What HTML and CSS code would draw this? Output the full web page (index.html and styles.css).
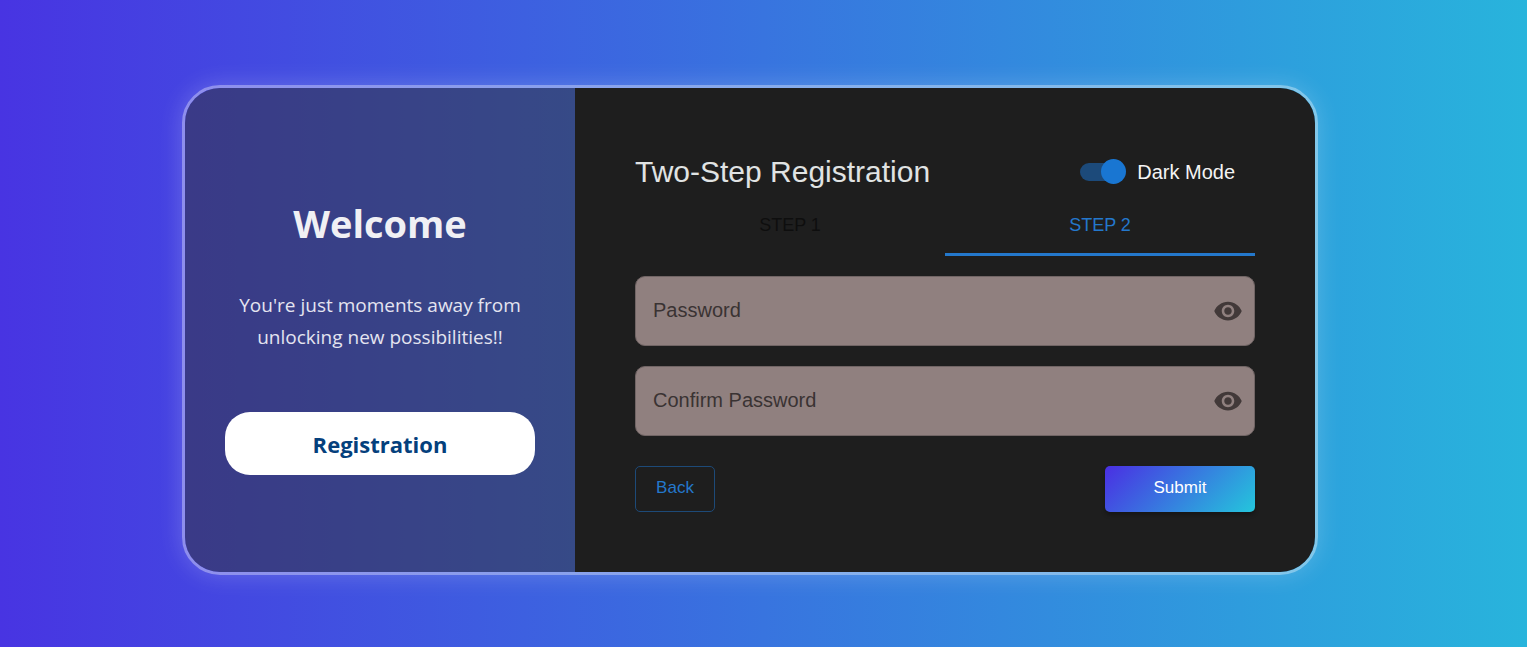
FILE: index.html
```html
<!DOCTYPE html>
<html lang="en">
<head>
<meta charset="utf-8">
<meta name="viewport" content="width=device-width, initial-scale=1">
<title>Two-Step Registration</title>
<link rel="stylesheet" href="styles.css">
</head>
<body>
<main class="card">
  <section class="welcome">
    <h1 class="welcome-title">Welcome</h1>
    <p class="welcome-text">You're just moments away from unlocking new possibilities!!</p>
    <button class="welcome-button" type="button">Registration</button>
  </section>
  <form class="form">
    <header class="form-header">
      <h2 class="form-title">Two-Step Registration</h2>
      <label class="mode"><input class="switch" type="checkbox" role="switch" checked>Dark Mode</label>
    </header>
    <div class="tabs" role="tablist">
      <button class="tab" type="button" role="tab" aria-selected="false">STEP 1</button>
      <button class="tab tab-active" type="button" role="tab" aria-selected="true">STEP 2</button>
    </div>
    <div class="fields">
      <div class="field">
        <input class="field-input" type="password" placeholder="Password" aria-label="Password">
        <button class="eye" type="button" aria-label="Show password">
          <svg class="eye-icon" viewBox="0 0 24 24"><path d="M12 4.500C7 4.500 2.730 7.610 1 12c1.730 4.390 6 7.500 11 7.500s9.270-3.110 11-7.500c-1.730-4.390-6-7.500-11-7.500M12 17c-2.760 0-5-2.240-5-5s2.240-5 5-5 5 2.240 5 5-2.240 5-5 5m0-8c-1.660 0-3 1.340-3 3s1.340 3 3 3 3-1.340 3-3-1.340-3-3-3"/></svg>
        </button>
      </div>
      <div class="field">
        <input class="field-input" type="password" placeholder="Confirm Password" aria-label="Confirm Password">
        <button class="eye" type="button" aria-label="Show confirmed password">
          <svg class="eye-icon" viewBox="0 0 24 24"><path d="M12 4.500C7 4.500 2.730 7.610 1 12c1.730 4.390 6 7.500 11 7.500s9.270-3.110 11-7.500c-1.730-4.390-6-7.500-11-7.500M12 17c-2.760 0-5-2.240-5-5s2.240-5 5-5 5 2.240 5 5-2.240 5-5 5m0-8c-1.660 0-3 1.340-3 3s1.340 3 3 3 3-1.340 3-3-1.340-3-3-3"/></svg>
        </button>
      </div>
    </div>
    <div class="actions">
      <button class="back" type="button">Back</button>
      <button class="submit" type="submit">Submit</button>
    </div>
  </form>
</main>
</body>
</html>
```
FILE: styles.css
```css
* { box-sizing: border-box; }

body {
  margin: 0;
  min-height: 100vh;
  padding: 37px 51px 24px 24px;
  display: flex;
  align-items: center;
  justify-content: center;
  background: linear-gradient(90deg, #4834e2, #28b4dc);
  font-family: "Liberation Sans", Arial, sans-serif;
}

button, input { font-family: inherit; }
button { cursor: pointer; }

.card {
  width: 100%;
  max-width: 1136px;
  display: grid;
  grid-template-columns: minmax(0, 39fr) minmax(0, 74fr);
  border: 3px solid rgba(255, 255, 255, 0.4);
  border-radius: 38px;
  box-shadow: 0 0 25px rgba(255, 255, 255, 0.2);
  overflow: hidden;
  background-clip: padding-box;
}

.welcome {
  padding: 40px;
  display: flex;
  flex-direction: column;
  justify-content: center;
  text-align: center;
  font-family: "Segoe UI", "Open Sans", "Noto Sans", sans-serif;
  background: rgba(50, 50, 50, 0.51);
  color: #f0f0f4;
}

.welcome-title {
  margin: 0 0 28px;
  font-size: 38px;
  line-height: 76px;
}

.welcome-text {
  margin: 0 0 59px;
  font-size: 19px;
  line-height: 32px;
  color: #e4e4f0;
}

.welcome-button {
  height: 63px;
  border: 0;
  border-radius: 25px;
  background: #fff;
  color: #04407c;
  font-size: 22px;
  font-weight: 700;
}

.form {
  padding: 60px;
  background: #1e1e1e;
}

.form-header {
  height: 48px;
  padding-right: 20px;
  display: flex;
  align-items: center;
  justify-content: space-between;
}

.form-title {
  margin: 0;
  font-size: 30px;
  font-weight: 400;
  color: #e0e3e3;
}

.mode {
  display: flex;
  align-items: center;
  gap: 11px;
  font-size: 20px;
  color: #f4f4f4;
}

.switch {
  appearance: none;
  position: relative;
  width: 42px;
  height: 18px;
  margin: 0 4px 0 0;
  border-radius: 9px;
  background: #1c4a7a;
}

.switch::before {
  content: "";
  position: absolute;
  top: -4px;
  right: -4px;
  width: 25px;
  height: 25px;
  border-radius: 50%;
  background: #1976d2;
}

.tabs {
  height: 60px;
  display: flex;
}

.tab {
  flex: 1;
  padding: 2px 0 0;
  border: 0;
  border-bottom: 3px solid transparent;
  background: none;
  font-size: 18px;
  color: #0e0e0e;
}

.tab-active {
  color: #2478cc;
  border-bottom-color: #2478cc;
}

.fields {
  display: grid;
  gap: 20px;
  margin: 20px 0 30px;
}

.field {
  height: 70px;
  display: flex;
  align-items: center;
  padding-right: 11px;
  border: 1px solid #716565;
  border-radius: 10px;
  background: #90807f;
}

.field-input {
  flex: 1;
  min-width: 0;
  height: 100%;
  padding: 0 17px 2px;
  border: 0;
  outline: 0;
  background: none;
  font-size: 20px;
  color: #3a3333;
}

.field-input::placeholder { color: #3a3333; opacity: 1; }

.eye {
  display: flex;
  padding: 0;
  border: 0;
  background: none;
}

.eye-icon {
  width: 30px;
  height: 30px;
  fill: #423939;
}

.actions {
  display: flex;
  justify-content: space-between;
}

.back, .submit {
  height: 46px;
  padding: 0 0 2px;
  border-radius: 5px;
  font-size: 17px;
}

.back {
  width: 80px;
  border: 1px solid #1d4a78;
  background: none;
  color: #2478cc;
}

.submit {
  width: 150px;
  border: 0;
  background: linear-gradient(135deg, #4a2fe3, #24c6dc);
  box-shadow: 0 3px 4px rgba(0, 0, 0, 0.3);
  color: #fff;
}
```
